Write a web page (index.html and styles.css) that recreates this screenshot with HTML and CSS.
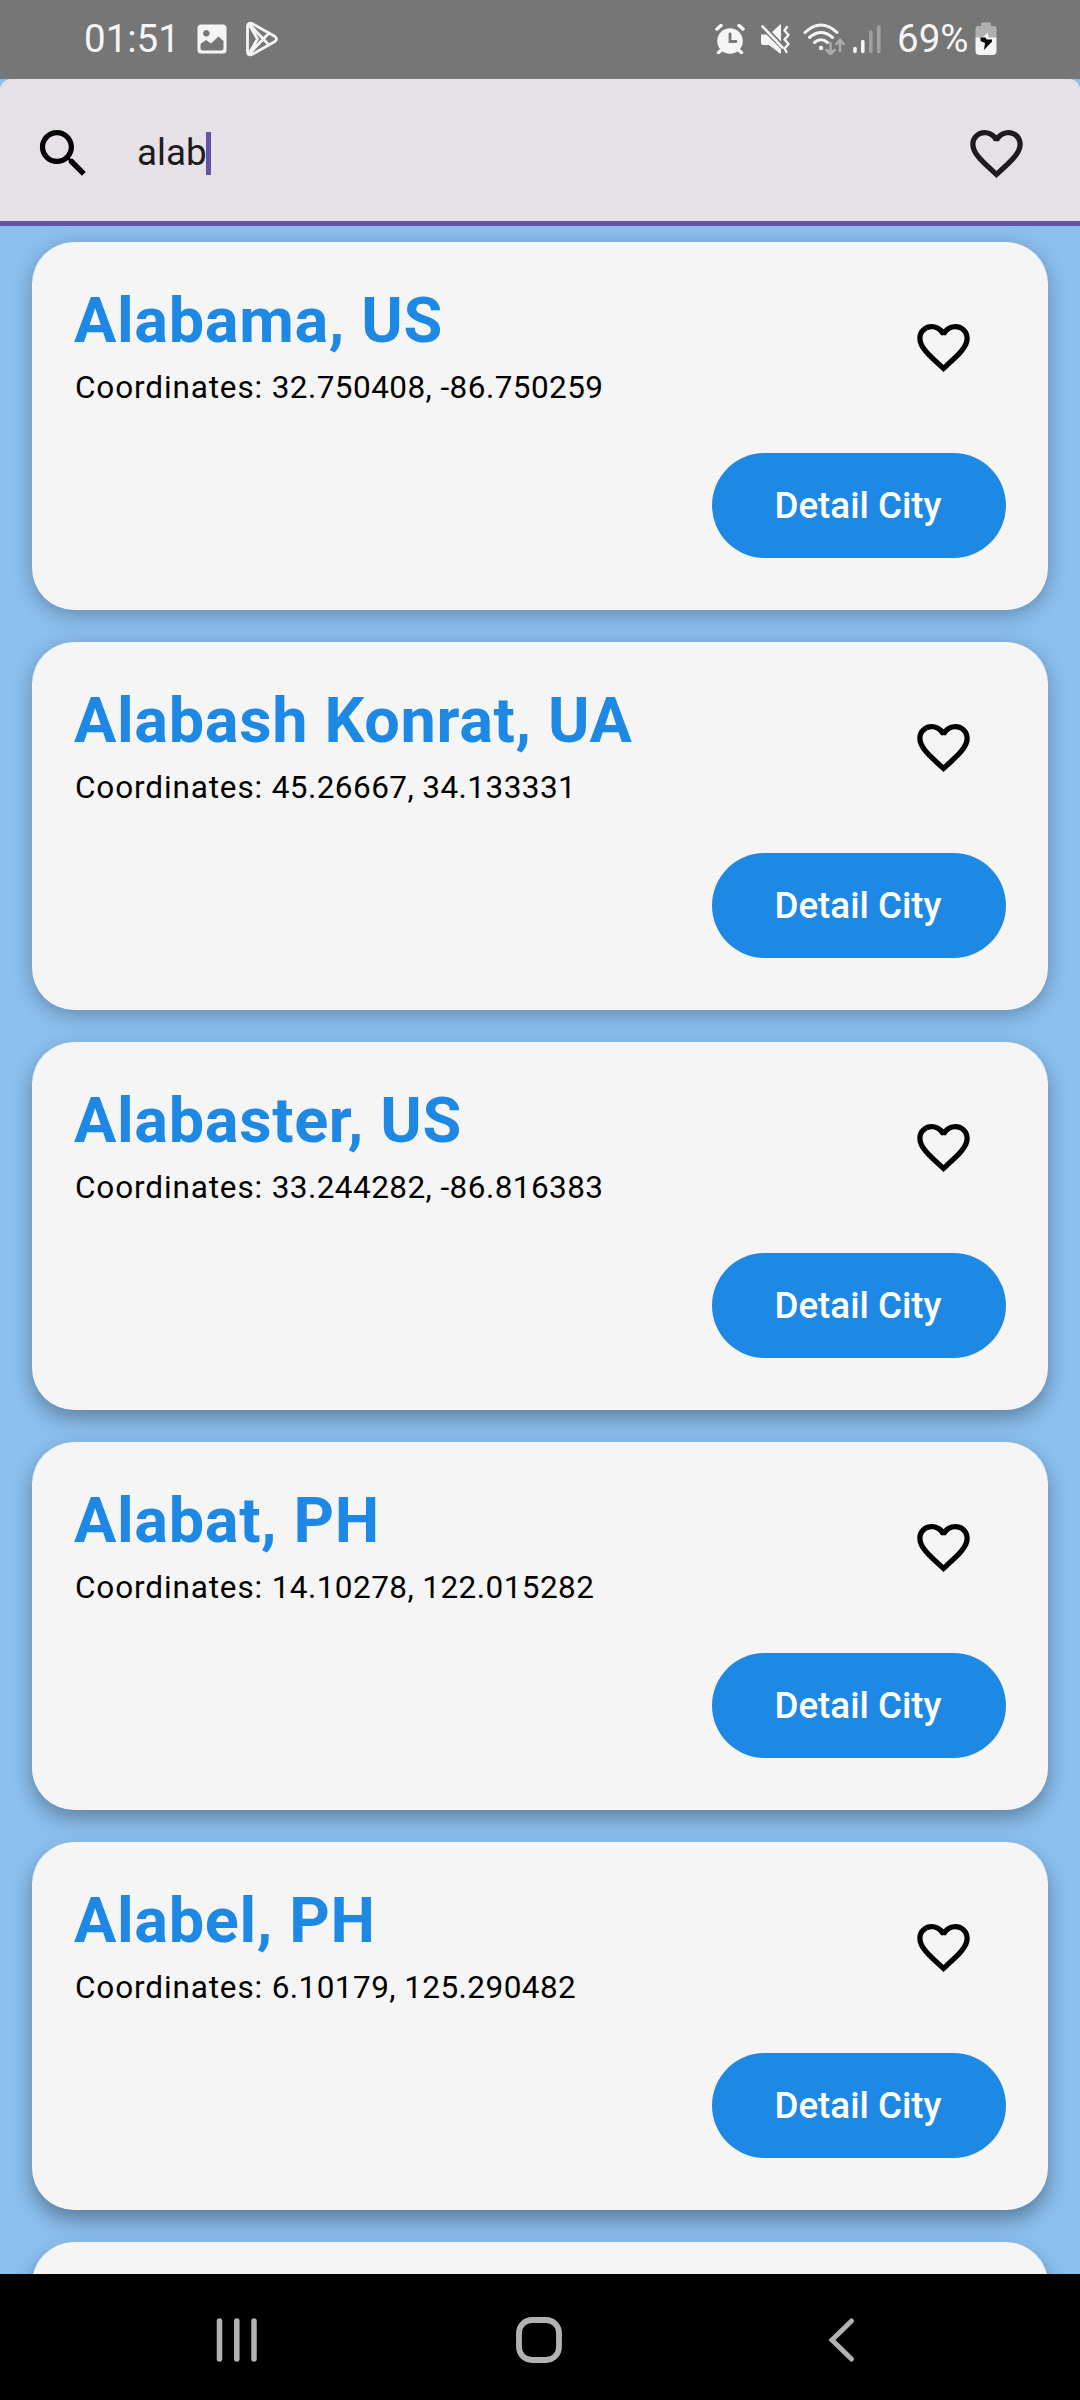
FILE: index.html
```
<!DOCTYPE html>
<html lang="en">
<head>
<meta charset="utf-8">
<title>City search</title>
<link rel="stylesheet" href="styles.css">
</head>
<body>
<svg class="defs" aria-hidden="true">
  <symbol id="heart" viewBox="0 0 24 24"><path d="M16.5 3c-1.74 0-3.41.81-4.5 2.09C10.91 3.81 9.24 3 7.5 3 4.42 3 2 5.42 2 8.5c0 3.78 3.4 6.86 8.55 11.54L12 21.35l1.45-1.32C18.6 15.36 22 12.28 22 8.5 22 5.42 19.58 3 16.5 3zm-4.4 15.55l-.1.1-.1-.1C7.14 14.24 4 11.39 4 8.5 4 6.5 5.5 5 7.5 5c1.54 0 3.04.99 3.57 2.36h1.87C13.46 5.99 14.96 5 16.5 5c2 0 3.5 1.5 3.5 3.5 0 2.89-3.14 5.74-7.9 10.05z"/></symbol>
</svg>
<div class="screen">
  <header class="status">
    <span class="clock">01:51</span>
    <svg class="photo" width="30" height="30" viewBox="0 0 30 30"><path fill="#f5f5f5" fill-rule="evenodd" d="M4 .5h22a3.500 3.500 0 0 1 3.500 3.500v22a3.500 3.500 0 0 1-3.500 3.500H4A3.500 3.500 0 0 1 .5 26V4A3.500 3.500 0 0 1 4 .5zM9.300 6a3.300 3.300 0 1 0 .01 0zM3.500 20v4.500a2 2 0 0 0 2 2h19a2 2 0 0 0 2-2V17l-5-4.500-7.500 7-5-3.500z"/></svg>
    <svg class="play" width="34" height="36" viewBox="0 0 34 36" fill="none" stroke="#f5f5f5" stroke-width="2.800" stroke-linejoin="round"><path d="M2.500 5v26q.5 4 4.500 2.500L30 20.500q3-2.500 0-5L7 2.500Q3 1 2.500 5zM4 3l20 21M4 33l20-21M5 5l7.500 13L5 31"/></svg>
    <span class="space"></span>
    <svg class="alarm" width="30" height="30" viewBox="0 0 30 30" stroke-linecap="round"><circle cx="15" cy="17" r="12.800" fill="#f5f5f5"/><path d="M2 5l4-3.500M28 5l-4-3.500M6.500 26L3.500 28.500M23.500 26l3 2.500" stroke="#f5f5f5" stroke-width="3.500"/><path d="M15 10v7.500h6" fill="none" stroke="#767676" stroke-width="2.800"/></svg>
    <svg class="mute" width="30" height="30" viewBox="0 0 30 30"><path fill="#f5f5f5" d="M1 10.500h5.500L21 25v4.500h-1L9 21H3q-2 0-2-2zM12 8l8-7.500h1v17z"/><path d="M2.500 2.500l20 21" stroke="#f5f5f5" stroke-width="2.600" stroke-linecap="round"/><path d="M27 3l-2.500 3.500 4 4.500-4 4.500 4 4.500-4 4.500 2 3.500" fill="none" stroke="#f5f5f5" stroke-width="2.400" stroke-linecap="round" stroke-linejoin="round"/></svg>
    <svg class="wifi" width="42" height="32" viewBox="0 0 42 32" fill="none" stroke="#f5f5f5" stroke-width="3" stroke-linecap="round"><path d="M2 9.500q16-15 32 0M6.500 14.500q11.500-10 23 0M11.500 19.500q6.500-5.500 13 0"/><circle cx="18" cy="25" r="2.200" fill="#f5f5f5" stroke="none"/><path d="M27.500 20v10.500M23.500 27l4 4 4-4M37 28V17.500M33.500 21l3.500-4 3.500 4" stroke="#adadad" stroke-width="2.500"/></svg>
    <svg class="signal" width="28" height="30" viewBox="0 0 28 30" stroke-width="3.600" stroke-linecap="round"><path d="M2 24.500v3M9.800 17.500v10" stroke="#f5f5f5"/><path d="M17.800 8v19.500M25.800 3v24.500" stroke="#a0a0a0"/></svg>
    <span class="percent">69%</span>
    <svg class="battery" width="22" height="34" viewBox="0 0 22 34"><path fill="#b0b0b0" d="M7 .5h8q1 0 1 1V4h3q2.500 0 2.500 2.500V16H.5V6.500Q.5 4 3 4h3V1.500q0-1 1-1z"/><path fill="#f5f5f5" d="M.5 15.500h21V29q0 4-4 4h-13q-4 0-4-4z"/><path fill="#f5f5f5" d="M12.500 10.500L5.500 18h9z"/><path fill="#000" d="M5.500 15.500h5l1 2h5.500v2L9 28l1-7-4.500-2z"/></svg>
  </header>
  <main class="app">
    <div class="search">
      <svg class="icon lens" viewBox="0 0 24 24"><path d="M15.500 14h-.79l-.28-.27C15.410 12.590 16 11.110 16 9.500 16 5.910 13.090 3 9.500 3S3 5.910 3 9.500 5.910 16 9.500 16c1.610 0 3.090-.59 4.230-1.570l.27.28v.79l5 4.990L20.490 19l-4.990-5zm-6 0C7.010 14 5 11.990 5 9.500S7.010 5 9.500 5 14 7.010 14 9.500 11.990 14 9.500 14z"/></svg>
      <div class="query"><span>alab</span><i class="caret"></i></div>
      <svg class="icon saved"><use href="#heart"/></svg>
    </div>
    <section class="list">
      <article class="card">
        <div class="top"><div><h2>Alabama, US</h2><p><span class="label">Coordinates: </span>32.750408, -86.750259</p></div><svg class="icon fav"><use href="#heart"/></svg></div>
        <button>Detail City</button>
      </article>
      <article class="card">
        <div class="top"><div><h2>Alabash Konrat, UA</h2><p><span class="label">Coordinates: </span>45.26667, 34.133331</p></div><svg class="icon fav"><use href="#heart"/></svg></div>
        <button>Detail City</button>
      </article>
      <article class="card">
        <div class="top"><div><h2>Alabaster, US</h2><p><span class="label">Coordinates: </span>33.244282, -86.816383</p></div><svg class="icon fav"><use href="#heart"/></svg></div>
        <button>Detail City</button>
      </article>
      <article class="card">
        <div class="top"><div><h2>Alabat, PH</h2><p><span class="label">Coordinates: </span>14.10278, 122.015282</p></div><svg class="icon fav"><use href="#heart"/></svg></div>
        <button>Detail City</button>
      </article>
      <article class="card">
        <div class="top"><div><h2>Alabel, PH</h2><p><span class="label">Coordinates: </span>6.10179, 125.290482</p></div><svg class="icon fav"><use href="#heart"/></svg></div>
        <button>Detail City</button>
      </article>
      <article class="card"></article>
    </section>
  </main>
  <nav class="nav">
    <svg width="42" height="46" viewBox="0 0 42 46"><path d="M3.500 4v38M20.800 4v38M38 4v38" stroke="#b2b2b2" stroke-width="5.500" stroke-linecap="round"/></svg>
    <svg class="home" width="46" height="46" viewBox="0 0 46 46"><rect x="3" y="3" width="40" height="40" rx="13" fill="none" stroke="#b2b2b2" stroke-width="5.800"/></svg>
    <svg width="28" height="46" viewBox="0 0 28 46"><path d="M23.500 4L4 23l19.500 19" fill="none" stroke="#b2b2b2" stroke-width="5"  stroke-linecap="round"/></svg>
  </nav>
</div>
</body>
</html>
```
FILE: styles.css
```
* { box-sizing: border-box; margin: 0; }
body { font-family: Roboto, sans-serif; background: #8bbfee; }
svg { display: block; flex: none; }
.defs { position: absolute; width: 0; height: 0; }
.screen { width: 1080px; height: 2400px; display: flex; flex-direction: column; overflow: hidden; }

.status { height: 79px; flex: none; background: #767676; color: #f5f5f5; display: flex; align-items: center; padding: 0 83px 1px 84px; font-size: 38.500px; line-height: 76px; }
.clock { width: 113px; }
.photo { margin-right: 18px; }
.space { flex: 1; }
.alarm { margin-right: 15px; }
.mute { margin-right: 13px; }
.wifi { margin-right: 8px; }
.signal { margin-right: 16px; }
.percent { width: 78px; }

.app { flex: 1; min-height: 0; display: flex; flex-direction: column; overflow: hidden; }
.search { height: 147px; flex: none; position: relative; z-index: 1; display: flex; align-items: center; padding: 6px 52px 0 32px; background: #e6e1e6; border-bottom: 5px solid #6552a3; border-radius: 11px 11px 0 0; }
.icon { width: 63px; height: 63px; flex: none; fill: #000; }
.saved { fill: #1d1b20; }
.query { flex: 1; display: flex; align-items: center; padding-left: 42px; color: #1d1b20; font-size: 36.750px; line-height: 44px; }
.caret { width: 5px; height: 43px; margin-left: -1px; background: #6552a3; }

.list { display: flex; flex-direction: column; gap: 32px; padding: 16px 32px 0; }
.card { height: 368px; flex: none; display: flex; flex-direction: column; background: #f5f5f5; border-radius: 42px; padding: 42px; box-shadow: 0 5px 20px rgba(0,0,0,.27); }
.card:nth-child(n+3) { box-shadow: 0 8px 20px rgba(0,0,0,.32); }
.card:nth-child(n+5) { box-shadow: 0 10px 20px rgba(0,0,0,.34); }
.top { display: flex; justify-content: space-between; height: 169px; padding-right: 31px; }
.fav { margin-top: 32px; }
h2 { color: #1e88e5; font-size: 63px; line-height: 72px; font-weight: 700; letter-spacing: .656px; margin-top: 1px; }
p { font-size: 31.500px; line-height: 42px; margin: 10px 0 0 1px; letter-spacing: .440px; color: #000; }
.label { letter-spacing: .860px; }
button { align-self: flex-end; width: 294px; height: 105px; border: 0; border-radius: 53px; background: #1e88e5; color: #fff; font: 500 36.750px Roboto, sans-serif; padding: 0 2px 0 0; }

.nav { height: 126px; flex: none; background: #000; display: flex; align-items: center; justify-content: space-between; padding: 6px 224px 0 216px; }
.home { margin-right: 8px; }
```
